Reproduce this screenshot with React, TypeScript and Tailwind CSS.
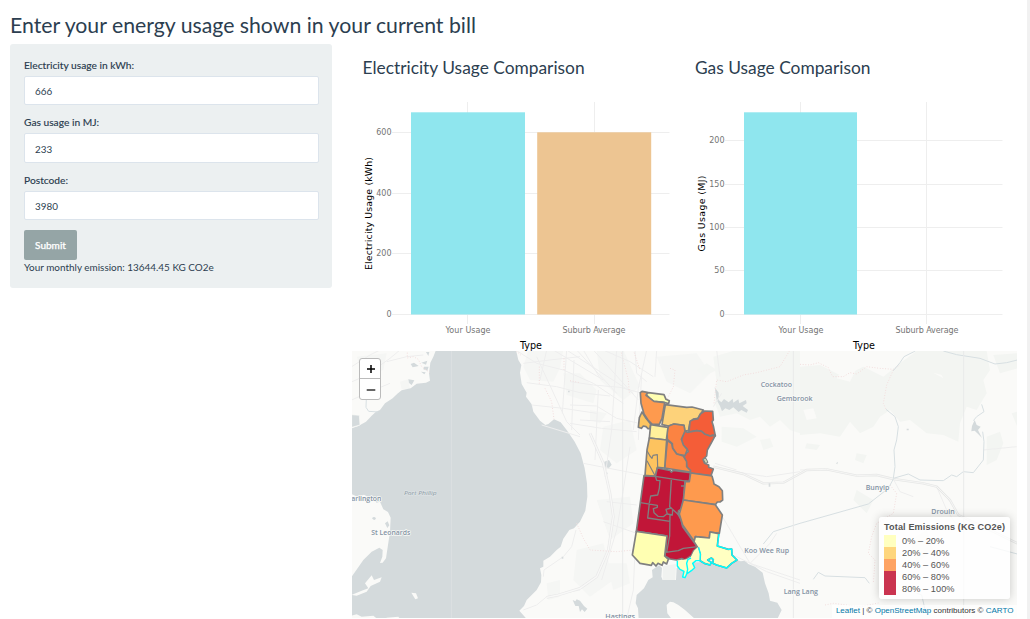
import React from "react";

type Tick = { y: number; label: string };
type Bar = { x: number; y: number; w: number; fill: string };

const VERDANA = "'DejaVu Sans', Verdana, sans-serif";

function Field({ label, value, id }: { label: string; value: string; id: string }) {
  return (
    <div className="mb-[10.3px] flex flex-col">
      <label htmlFor={id} className="mb-[3px] h-[15px] text-[10.2px] leading-[15px] font-medium [-webkit-text-stroke:0.1px_#2c3e50]">
        {label}
      </label>
      <input
        id={id}
        defaultValue={value}
        className="h-[29.2px] w-full rounded-[2px] border border-[#dce4ec] bg-white px-[10px] pt-[1px] text-[9.9px] text-[#2c3e50] outline-none"
      />
    </div>
  );
}

function BarChart({
  title,
  axis,
  axisLength,
  left,
  secondColumn,
  ticks,
  bars,
}: {
  title: string;
  axis: string;
  axisLength: number;
  left: number;
  secondColumn: number;
  ticks: Tick[];
  bars: Bar[];
}) {
  return (
    <section className="flex w-[332.5px] flex-col">
      <h2 className="h-[46px] pt-[11px] pl-[10.5px] text-[17.35px] leading-[26px]">{title}</h2>
      <svg className="block h-[261px] w-[332px]" viewBox={`${left} 90 332 261`} fontFamily={VERDANA}>
        <g stroke="#eeeeee" strokeWidth="1">
          {ticks.map((t) => (
            <line key={t.label} x1={left + 40} x2={left + 317.5} y1={t.y} y2={t.y} />
          ))}
          <line x1={left + 115.5} x2={left + 115.5} y1="102" y2="324" />
          <line x1={secondColumn} x2={secondColumn} y1="102" y2="324" />
        </g>
        {bars.map((b) => (
          <rect key={b.x} x={b.x} y={b.y} width={b.w} height={314.5 - b.y} fill={b.fill} />
        ))}
        <g fill="#747474" fontSize="8">
          {ticks.map((t) => (
            <text key={t.label} x={left + 39.5} y={t.y + 2.8} textAnchor="end">
              {t.label}
            </text>
          ))}
          <text x={left + 93.5} y="333" textLength="45">Your Usage</text>
          <text x={left + 210.5} y="333" textLength="63">Suburb Average</text>
        </g>
        <g fill="#000" fontSize="9.6">
          <text x={left + 168} y="349" textLength="22">Type</text>
          <text
            transform={`translate(${left + 20} ${213.5 + axisLength / 2}) rotate(-90)`}
            textLength={axisLength}
            fontSize="9.4"
          >
            {axis}
          </text>
        </g>
      </svg>
    </section>
  );
}

const roadsWest = [
  "M0,98 L40,80 85,50 120,25 150,0", "M5,50 L60,15 90,0", "M110,35 L170,20 220,15", "M5,150 L60,125 120,100",
  "M500,2 L560,40 640,60 730,100 820,160", "M520,40 L600,30 690,20", "M530,98 L620,110 690,128 780,138",
  "M560,20 L650,215 690,255", "M545,165 L640,175 740,190", "M590,0 L570,90 M650,0 L637,190 M672,30 L665,240",
  "M575,225 L690,260 M610,0 L760,90 M650,0 L850,130",
  "M580,680 L582,660 640,620 665,590 678,540", "M520,780 L560,765 590,740 690,720",
];
const roadsMid = [
  "M0,95 L70,105 150,112 210,128", "M0,165 L80,168 140,205 230,225", "M0,220 L95,235 200,245",
  "M70,0 L205,150 M20,0 L140,130 M100,0 L180,35 250,80", "M40,0 L90,85 M30,210 L120,215 M85,120 L75,330",
  "M140,0 L125,240 105,380 M195,0 L200,70 230,95 M230,0 L205,115 190,240 M215,70 L205,270",
  "M40,340 L220,375 M110,455 L200,465 M100,515 L200,550", "M195,600 L190,720 170,807 M260,0 L255,80 M180,290 L160,420 140,540 95,690",
  "M430,350 L525,370 590,380 690,365", "M436,464 L540,640 690,690", "M430,600 L500,620 540,640 590,665 690,700",
  "M440,0 L450,80 M455,130 L430,170 M435,340 L500,360", "M540,640 L600,580 620,550",
];
const roadsEast = [
  "M0,360 L80,358 170,377 230,375 280,387 370,400 410,410 440,440 475,495 560,535 652,580",
  "M410,410 L440,480 480,540 M280,387 L300,425 340,440", "M550,300 L650,290",
];

function Label({ x, y, w, children, italic = false }: { x: number; y: number; w: number; children: string; italic?: boolean }) {
  return (
    <text
      x={x}
      y={y}
      textLength={w}
      lengthAdjust="spacingAndGlyphs"
      fontStyle={italic ? "italic" : "normal"}
      fontWeight={italic ? 500 : 600}
      fill={italic ? "#8b9ba5" : "#8493a4"}
      stroke={italic ? "#dde2e4" : "#fafaf8"}
      strokeWidth="4"
      paintOrder="stroke"
    >
      {children}
    </text>
  );
}

function BaseMap() {
  return (
    <svg className="block h-[267px] w-[665px]" viewBox="352 351 665 267" preserveAspectRatio="none">
      <rect x="352" y="351" width="665" height="267" fill="#fafaf8" />
      <g transform="translate(350 350) scale(0.333333)" fill="none" strokeLinejoin="round">
        <g fill="#f5f6f4">
          <path d="M535,0 L640,0 630,55 610,95 540,90 520,50Z M640,70 L690,70 740,120 730,160 650,135Z M590,700 L630,690 630,740 595,750Z M20,20 L110,10 100,60 40,75Z M150,95 L175,88 180,120 155,118Z" />
          <g transform="translate(660 0)">
            <path d="M80,0 L160,0 210,110 160,150 90,90Z M260,20 L380,10 420,70 360,130 290,95Z M100,230 L180,210 200,300 140,340 90,300Z M20,600 L100,580 130,690 60,740 10,690Z M80,450 L180,440 190,520 120,570Z M110,640 L170,640 180,700 130,720Z M60,180 L110,190 90,220 60,210Z" />
          </g>
        </g>
        <g fill="#f4f6f3" transform="translate(660 0)">
          <path d="M430,20 L500,0 690,0 690,250 660,240 630,210 600,230 570,200 540,210 500,190 450,200 435,160 440,100Z M455,230 L520,235 560,260 500,290 455,275Z M570,270 L600,265 610,290 580,300Z M440,60 L400,80 380,60 410,40Z" />
        </g>
        <g fill="#f3f5f2" transform="translate(1350 0)">
          <path d="M0,50 L60,45 130,80 190,50 250,80 300,40 350,3 560,3 570,60 550,90 560,130 530,180 500,170 480,220 475,275 430,255 380,250 330,210 300,215 270,180 240,200 220,230 180,250 150,215 120,260 60,250 0,255Z M580,15 L652,10 652,55 600,70Z M560,260 L600,245 610,280 590,330 560,345Z M170,310 L200,315 190,340 165,330Z M635,190 L652,185 652,230Z M20,280 L60,285 50,300 15,295Z M170,420 L220,450 200,490 160,450Z M330,570 L380,540 400,600 350,640Z" />
          <path fill="#fafaf8" d="M125,60 L170,55 150,95 110,85Z M10,180 L40,175 50,205 20,210Z M400,68 L425,75 430,85Z" />
        </g>

        <path
          fill="#d4dadc"
          d="M258,0 L250,20 241,38 237,70 240,92 228,98 200,101 182,115 155,121 142,131 128,145 105,160 90,180 78,185 65,197 48,215 25,228 5,235 V432 L22,440 42,434 68,448 80,458 90,455 100,478 114,486 122,503 120,545 114,585 108,625 98,638 90,639 97,620 98,600 88,593 65,605 40,630 5,680 V807 H530 L508,782 522,768 530,750 560,720 573,697 574,675 570,655 580,650 580,632 600,620 620,600 632,590 640,566 658,540 672,535 690,515 706,482 712,440 711,400 704,355 692,310 674,275 650,240 632,217 612,208 595,222 586,225 570,212 550,185 545,163 528,140 530,128 515,102 510,68 514,45 505,30 498,0Z"
        />
        <path fill="#d4dadc" d="M5,194 L28,196 30,225 5,232Z" stroke="#fafaf8" strokeWidth="2" />
        <g fill="#d4dadc">
          <path d="M175,88 l18,3 -8,14 -8,-6Z M182,42 l10,-4 14,10 -18,4Z M214,38 l18,-6 -4,12Z M222,50 l14,0 -4,12 -12,-4Z M213,65 l14,2 -4,6Z M228,6 l10,0 -3,12Z M66,505 q6,-8 12,0 q-4,10 -12,0Z M105,520 l8,-6 5,12 -6,8Z" />
          <path d="M668,750 l8,4 4,-6 10,4 12,16 10,8 -8,10 -8,-8 -6,8 -4,-18 -10,0Z" />
          <path d="M763,335 l14,-5 8,14 -10,12 -8,-6 -8,8Z M765,368 l8,0 -4,14Z" />
        </g>
        <g fill="#fafaf8">
          <path d="M5,735 L35,722 55,715 45,700 65,676 72,690 95,682 90,695 62,708 50,725 20,737Z" />
          <path d="M184,728 L198,730 204,745 196,748Z" />
          <path d="M5,797 L20,793 35,800 70,797 82,807 5,807Z M110,803 L145,800 150,807 108,807Z" />
        </g>

        <g transform="translate(660 0)">
          <path
            fill="#d4dadc"
            d="M260,650 L268,646 276,654 274,680 278,690 318,690 320,655 330,640 500,630 512,634 525,632 535,642 555,650 578,668 585,700 596,730 600,752 622,758 635,780 622,807 H375 L345,780 325,765 310,757 300,755 290,765 292,790 305,807 H206 L204,775 197,760 200,735 222,715 235,690 248,682 246,660Z"
          />
          <path fill="#f0f2f0" d="M279,648 L318,642 316,690 278,690Z" />
          <path
            fill="#d4dadc"
            d="M434,112 L446,128 446,150 454,157 462,147 476,157 488,146 490,158 505,148 508,160 528,150 530,160 518,168 534,180 530,188 514,180 506,186 490,172 478,180 466,175 456,184 450,168 440,150Z"
          />
        </g>

        <g stroke="#eeeeee" strokeWidth="3">
          {roadsWest.map((d) => <path key={d} d={d} />)}
          <g transform="translate(660 0)">{roadsMid.map((d) => <path key={d} d={d} />)}</g>
          <g transform="translate(1350 0)">{roadsEast.map((d) => <path key={d} d={d} />)}</g>
        </g>
        <path d="M590,742 L625,735 690,715 740,680 775,600 790,500 780,430 760,340 720,250" stroke="#e9e9e9" strokeWidth="8" />
        <path d="M590,742 L625,735 690,715 740,680 775,600 790,500 780,430 760,340 720,250" stroke="#f8f8f7" strokeWidth="4" />
        <path d="M1090,350 L1180,372 1240,400 1300,398 1370,360 1430,358 1520,377 1580,375 1630,387 1720,400 1760,410 1800,450 1825,495 1910,535 2002,580" stroke="#e6e7e6" strokeWidth="7" />
        <path d="M1090,350 L1180,372 1240,400 1300,398 1370,360 1430,358 1520,377 1580,375 1630,387 1720,400 1760,410 1800,450 1825,495 1910,535 2002,580" stroke="#f6f6f5" strokeWidth="3" />

        <g stroke="#f2dddd" strokeWidth="3" strokeDasharray="3 5">
          <path d="M172,0 L172,24 190,20 205,28 215,50 240,68 M498,2 L515,18 M568,50 L568,105 M585,115 L605,155 612,208 M642,25 L642,60 M660,92 L690,98" />
          <path d="M680,520 L700,565 720,600 800,605 850,600 M812,0 L835,90 838,130 M850,0 L870,60 M960,55 L975,60 970,110 950,150 M1092,160 L1100,90 1130,95 1180,75 1220,68 1290,50 1320,0" />
          <g transform="translate(1350 0)">
            <path d="M0,43 L30,45 55,38 85,53 98,80 130,80 150,68 170,72 200,50 240,55 280,58 300,45 M280,60 L260,105 250,160 258,178 M270,405 L290,430 280,490 230,520 215,560 205,610 225,630 220,700 M75,765 L100,760 180,770 240,758" />
          </g>
        </g>
        <g stroke="#d7dfe2" strokeWidth="3">
          <path d="M49,145 L48,172 56,184 84,186" />
          <path d="M1240,582 L1270,545 1350,520 1555,462 1615,415 1630,387" />
          <g transform="translate(1350 0)">
            <path d="M280,62 L300,38 312,20 340,6 350,0 M430,3 L470,14 540,25 585,42 620,38 652,30 M258,178 L285,200 295,230 290,270 282,300 285,350 280,385 L325,372 360,390 430,392 455,375 470,380 490,365 520,368 550,330 552,275 548,245" />
            <path d="M545,163 L552,185 530,200 520,212" />
            <path d="M40,688 L55,667 75,678 195,683 208,700 M350,730 L365,735 372,765 375,780 M570,590 L652,612" />
          </g>
        </g>
        <path fill="#d4dadc" transform="translate(1350 0)" d="M516,228 l8,-18 6,15 12,5 -8,10 12,24 -14,-14 -8,-8 -10,2Z" />
        <g fill="#d7dcdd">
          <path d="M1256,400 h5 v10 h-5Z M1670,236 h6 v5 h-6Z M1458,340 l6,-5 -2,8Z M635,620 h5 v6 h-5Z M654,122 h5 v5 h-5Z" />
        </g>
        <path d="M304,3 V807" stroke="#e0e4e6" strokeWidth="2" />
        <path d="M818,3 V807 M1330,3 V807 M1841,3 V807" stroke="#e9eaea" strokeWidth="3" />

        <g fontFamily="'Open Sans', Lato, sans-serif" fontSize="18.5">
          <Label x={4} y={454} w={90}>arlington</Label>
          <Label x={162} y={434} w={98} italic>Port Phillip</Label>
          <Label x={64} y={556} w={117}>St Leonards</Label>
          <Label x={1232} y={110} w={94}>Cockatoo</Label>
          <Label x={1280} y={153} w={108}>Gembrook</Label>
          <Label x={1183} y={608} w={134}>Koo Wee Rup</Label>
          <Label x={1301} y={733} w={103}>Lang Lang</Label>
          <Label x={1547} y={420} w={71}>Bunyip</Label>
          <Label x={1744} y={491} w={70}>Drouin</Label>
          <Label x={766} y={808} w={89}>Hastings</Label>
        </g>

        <g transform="translate(660 0)" stroke="#808080" strokeWidth="5">
          <path fill="#ffffb2" d="M228,134 L235,128 282,134 288,148 298,152 296,161 278,156 250,154Z" />
          <path fill="#fdc560" d="M216,186 L208,203 205,232 214,235 220,228 228,230 234,236 240,236 242,222 228,205Z" />
          <path fill="#fe9a4e" d="M211,128 L216,124 232,127 228,136 252,154 284,158 276,205 268,223 246,222 234,210 222,192 213,160Z" />
          <path fill="#fdd27a" d="M286,164 L350,172 366,171 400,180 392,192 384,205 370,207 360,217 355,243 344,242 342,226 312,222 296,228 276,224Z" />
          <path fill="#f45d38" d="M404,183 L428,184 430,210 426,215 430,228 436,258 428,255 420,258 405,253 395,244 380,242 357,246 360,214 372,208 383,207 391,192Z" />
          <path fill="#f45d38" d="M344,243 L352,247 380,242 395,244 405,253 420,258 436,256 426,275 412,300 410,318 L399,328 404,340 416,345 416,352 430,357 423,377 362,369 350,350 348,335 340,315 355,305 350,295 340,287 334,268Z" />
          <path fill="#fb8342" d="M296,228 L312,222 342,226 345,243 334,268 340,285 352,299 345,317 L320,312 308,295 307,281 292,268 291,240Z" />
          <path fill="#fc8945" d="M292,272 L305,281 308,295 320,312 340,318 350,335 350,350 362,362 360,366 284,354Z" />
          <path fill="#fff09b" d="M242,224 L294,232 289,270 238,264Z" />
          <path fill="#fdc35f" d="M238,264 L290,270 284,354 262,352 256,379 225,376 231,300Z" />
          <path d="M231,302 L240,318 246,325 249,316 262,314 263,352 M231,332 L256,379" strokeWidth="3.5" />
          <path fill="#c11638" d="M256,379 L262,354 300,361 304,366 310,361 362,368 358,395 345,393 341,450 334,478 326,482 324,492 333,508 338,530 383,592 371,602 364,617 345,630 336,626 320,630 300,627 292,622 285,620 289,558 199,544 211,458 222,377Z" />
          <path
            d="M222,377 L256,379 358,395 M256,379 L260,391 270,392 268,415 263,435 242,438 238,459 M304,390 L299,470 304,474 288,478 292,492 307,495 308,478 M211,458 L262,466 262,472 250,476 252,488 264,499 280,500 290,492 M238,460 L233,504 300,514 M299,470 L332,500 M300,495 L299,558 290,606 M199,544 L292,558 M287,607 L325,602 340,595 383,590 M333,408 h10"
            strokeWidth="4"
          />
          <path fill="#fe9a4e" d="M362,369 L426,378 430,392 432,402 447,410 457,422 458,450 450,456 442,456 436,464 340,450 346,394 358,395Z" />
          <path fill="#fe9a4e" d="M340,450 L436,464 457,495 448,550 420,546 418,564 376,560 372,573 338,525 328,492Z" />
          <path fill="#ffffb2" d="M199,544 L291,558 284,618 295,628 290,642 280,636 276,646 264,640 258,648 248,638 244,646 210,640 187,615Z" />
          <path fill="#c9d7b3" strokeWidth="3" d="M399,327 L408,325 414,337 407,340Z" />
          <path fill="#ffffc2" d="M376,560 L418,564 420,546 446,551 442,588 475,598 485,597 486,615 501,630 485,640 470,654 440,645 428,640 430,629 424,624 413,630 424,637 420,645 403,640 390,632 391,612 383,592 372,575Z" />
          <path fill="#ffffc2" stroke="none" d="M372,602 L383,592 391,612 390,632 378,632 368,640 374,653 364,662 350,672 345,683 338,681 342,664 330,658 322,648 322,632 338,630 350,628 363,620Z" />
          <path stroke="#00ffff" strokeWidth="4.2" d="M447,552 L442,588 475,598 485,597 486,615 501,630 485,640 470,654 440,645 428,640 430,629 424,624 413,630 424,637 420,645 403,640 390,632 391,612 386,592 M390,632 L378,632 368,640 374,653 364,662 350,672 345,683 338,681 342,664 330,658 322,648 322,632 M350,672 L353,658 350,640 354,628 363,624" />
        </g>
      </g>
    </svg>
  );
}

const legend = [
  ["bg-[#ffffbf]", "0% – 20%"],
  ["bg-[#fed67d]", "20% – 40%"],
  ["bg-[#fea363]", "40% – 60%"],
  ["bg-[#ca3450]", "60% – 80%"],
  ["bg-[#ca3450]", "80% – 100%"],
];

function EmissionMap() {
  return (
    <div className="relative h-[267px] w-[665px] overflow-hidden font-['Liberation_Sans',Arial,sans-serif]">
      <BaseMap />
      <div className="absolute top-[7px] left-[7px] flex w-[22px] flex-col rounded-[3px] border border-[#bbbbbb] bg-white text-black">
        <button aria-label="Zoom in" className="flex h-[20px] items-center justify-center border-b border-[#bbbbbb] pl-[2px]">
          <svg viewBox="0 0 10 10" className="h-[10px] w-[10px]"><path d="M5 1V9M1 5H9" stroke="#000" strokeWidth="1.5" /></svg>
        </button>
        <button aria-label="Zoom out" className="flex h-[20px] items-center justify-center pt-[1px] pl-[2px]">
          <svg viewBox="0 0 10 10" className="h-[10px] w-[10px]"><path d="M.7 5H9.3" stroke="#000" strokeWidth="1.2" /></svg>
        </button>
      </div>
      <div className="absolute top-[166px] left-[527px] h-[82px] w-[131px] rounded-[3px] bg-white/80 pt-[4px] pl-[5px] text-[#555] shadow-[0_0_10px_rgba(0,0,0,0.2)]">
        <div className="h-[14px] text-[9.1px] leading-[13px] font-bold tracking-[0.14px] whitespace-nowrap">Total Emissions (KG CO2e)</div>
        {legend.map(([color, text]) => (
          <div key={text} className="flex h-[12px] items-center">
            <span className={`h-[12px] w-[12px] ${color}`} />
            <span className="ml-[6px] text-[9.2px] leading-[12px] tracking-[0.04px]">{text}</span>
          </div>
        ))}
      </div>
      <div className="absolute right-0 bottom-0 h-[13px] bg-white/70 pr-[3.5px] pl-[4px] text-[8.02px] leading-[12px] whitespace-nowrap text-[#333]">
        <a className="text-[#0078a8]">Leaflet</a> | © <a className="text-[#0078a8]">OpenStreetMap</a> contributors ©{" "}
        <a className="text-[#0078a8]">CARTO</a>
      </div>
    </div>
  );
}

export default function App() {
  return (
    <div className="flex h-[619px] w-[1030px] overflow-hidden bg-white font-[Lato,sans-serif] text-[#2c3e50]">
      <main className="flex flex-1 flex-col pl-[10px]">
        <h1 className="h-[44px] pt-[11px] text-[21.25px] leading-[28px]">Enter your energy usage shown in your current bill</h1>
        <div className="flex gap-[20px]">
          <form className="flex h-[244px] w-[322px] flex-col rounded-[3px] bg-[#ecf0f1] pt-[14px] pr-[13px] pl-[14px]" onSubmit={(e) => e.preventDefault()}>
            <Field id="electricity" label="Electricity usage in kWh:" value="666" />
            <Field id="gas" label="Gas usage in MJ:" value="233" />
            <Field id="postcode" label="Postcode:" value="3980" />
            <button className="h-[30px] w-[53px] rounded-[2px] bg-[#95a5a6] pt-[1px] text-[10px] font-medium text-white [-webkit-text-stroke:0.25px_white]">Submit</button>
            <p className="text-[9.93px] leading-[15px]">Your monthly emission: 13644.45 KG CO2e</p>
          </form>
          <div className="flex w-[665px] flex-col">
            <div className="flex">
              <BarChart
                title="Electricity Usage Comparison"
                axis="Electricity Usage (kWh)"
                axisLength={113}
                left={352}
                secondColumn={594.5}
                ticks={[
                  { y: 132.5, label: "600" },
                  { y: 193.5, label: "400" },
                  { y: 253.5, label: "200" },
                  { y: 314.5, label: "0" },
                ]}
                bars={[
                  { x: 411, y: 112.3, w: 114, fill: "#8fe6ee" },
                  { x: 537.2, y: 132.3, w: 114, fill: "#edc592" },
                ]}
              />
              <BarChart
                title="Gas Usage Comparison"
                axis="Gas Usage (MJ)"
                axisLength={76}
                left={685}
                secondColumn={926.5}
                ticks={[
                  { y: 140.5, label: "200" },
                  { y: 184.5, label: "150" },
                  { y: 227.5, label: "100" },
                  { y: 270.5, label: "50" },
                  { y: 314.5, label: "0" },
                ]}
                bars={[{ x: 744, y: 112.3, w: 113, fill: "#8fe6ee" }]}
              />
            </div>
            <EmissionMap />
          </div>
        </div>
      </main>
      <div className="w-[3px] bg-[#f1f1f1]" />
    </div>
  );
}
